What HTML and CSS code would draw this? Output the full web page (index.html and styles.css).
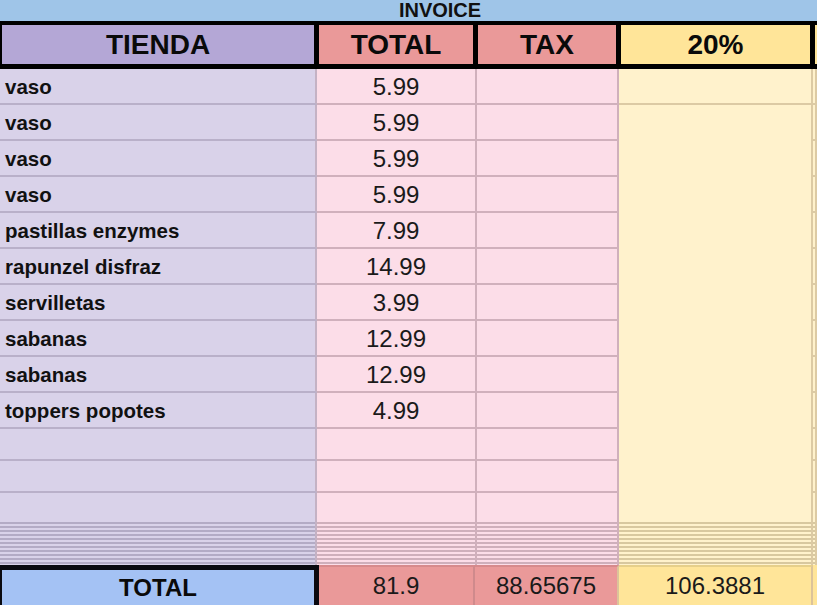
FILE: index.html
```html
<!DOCTYPE html>
<html>
<head>
<meta charset="utf-8">
<link rel="stylesheet" href="styles.css">
</head>
<body>
<div class="sheet">
  <div class="title"><span>INVOICE</span></div>
  <div class="head">
    <div class="h h-store">TIENDA</div>
    <div class="h h-total">TOTAL</div>
    <div class="h h-tax">TAX</div>
    <div class="h h-pct">20%</div>
    <div class="h h-extra"></div>
  </div>
  <div class="grid">
    <div class="c name">vaso</div><div class="c num">5.99</div><div class="c tax"></div><div class="c pct"></div><div class="c extra"></div>
    <div class="c name">vaso</div><div class="c num">5.99</div><div class="c tax"></div><div class="c pct-merged"></div><div class="c extra"></div>
    <div class="c name">vaso</div><div class="c num">5.99</div><div class="c tax"></div><div class="c extra"></div>
    <div class="c name">vaso</div><div class="c num">5.99</div><div class="c tax"></div><div class="c extra"></div>
    <div class="c name">pastillas enzymes</div><div class="c num">7.99</div><div class="c tax"></div><div class="c extra"></div>
    <div class="c name">rapunzel disfraz</div><div class="c num">14.99</div><div class="c tax"></div><div class="c extra"></div>
    <div class="c name">servilletas</div><div class="c num">3.99</div><div class="c tax"></div><div class="c extra"></div>
    <div class="c name">sabanas</div><div class="c num">12.99</div><div class="c tax"></div><div class="c extra"></div>
    <div class="c name">sabanas</div><div class="c num">12.99</div><div class="c tax"></div><div class="c extra"></div>
    <div class="c name">toppers popotes</div><div class="c num">4.99</div><div class="c tax"></div><div class="c extra"></div>
    <div class="c name"></div><div class="c num"></div><div class="c tax"></div><div class="c extra"></div>
    <div class="c name"></div><div class="c num"></div><div class="c tax"></div><div class="c extra"></div>
    <div class="c name nob"></div><div class="c num nob"></div><div class="c tax nob"></div><div class="c extra nob"></div>
    <div class="c s-name nob"></div><div class="c s-num nob"></div><div class="c s-tax nob"></div><div class="c s-pct nob"></div><div class="c s-extra nob"></div>
  </div>
  <div class="foot">
    <div class="f f-label">TOTAL</div>
    <div class="f f-total">81.9</div>
    <div class="f f-tax">88.65675</div>
    <div class="f f-pct">106.3881</div>
    <div class="f f-extra"></div>
  </div>
</div>
</body>
</html>
```
FILE: styles.css
```css
* { box-sizing: border-box; }
html, body { margin: 0; padding: 0; }
body {
  width: 817px;
  height: 605px;
  overflow: hidden;
  background: #fff2cc;
  font-family: "Liberation Sans", Arial, sans-serif;
  color: #111;
}
.sheet { width: 817px; }

.title {
  height: 21px;
  background: #9fc5e8;
  overflow: hidden;
  text-align: center;
  padding-left: 63px;
  font-weight: bold;
  font-size: 20px;
  line-height: 20px;
  color: #111;
}

.head {
  display: flex;
  gap: 5px;
  height: 48px;
  background: #000;
  padding: 4px 0 5px 2px;
}
.h {
  display: flex;
  align-items: center;
  justify-content: center;
  font-weight: bold;
  font-size: 28px;
  color: #0a0a0a;
}
.h-store { width: 312px; background: #b4a7d6; }
.h-total { width: 154px; background: #ea9999; }
.h-tax { width: 138px; background: #ea9999; }
.h-pct { width: 189px; background: #ffe599; }
.h-extra { flex: 1; background: #ffe599; }

.grid {
  display: grid;
  grid-template-columns: 317px 160px 142px 194px 1fr;
  grid-template-rows: repeat(10, 36px) 32px 32px 29px 43px;
}
.c {
  border-right: 2px solid;
  border-bottom: 2px solid;
  display: flex;
  align-items: center;
  padding-top: 2px;
}
.c.nob { border-bottom: none; }

.name {
  background: #d9d2e9;
  border-color: #b9b0c9;
  border-right-color: #c4b2c4;
  padding-left: 5px;
  font-weight: bold;
  font-size: 20.5px;
}
.num, .tax {
  background: #fcdde8;
  border-color: #d0b0bc;
}
.num {
  justify-content: center;
  font-size: 24px;
  color: #1a1a1a;
}
.pct, .pct-merged, .extra {
  background: #fff2cc;
  border-color: #dccaa4;
}
.pct-merged { grid-row: span 12; border-bottom: none; }

.s-name {
  border-right-color: #c4b2c4;
  background: repeating-linear-gradient(to bottom, #b3abc5 0 2px, #d9d2e9 2px 4px);
}
.s-num, .s-tax {
  border-right-color: #d0b0bc;
  background: repeating-linear-gradient(to bottom, #cfafbb 0 2px, #fcdde8 2px 4px);
}
.s-pct, .s-extra {
  border-right-color: #dccaa4;
  background: repeating-linear-gradient(to bottom, #d8c89f 0 2px, #fff2cc 2px 4px);
}

.foot {
  display: flex;
  height: 40px;
}
.f {
  display: flex;
  align-items: center;
  justify-content: center;
  font-size: 24px;
  color: #1a1a1a;
}
.f-label {
  width: 319px;
  background: #a4c2f4;
  border-top: 5px solid #0a0a10;
  border-left: 2px solid #0a0a10;
  border-right: 5px solid #0a0a10;
  font-weight: bold;
  color: #0a0a0a;
}
.f-total {
  width: 156px;
  background: #ea9999;
  border-top: 2px solid #d78a8c;
  border-right: 2px solid #cf8a8c;
}
.f-tax {
  width: 144px;
  background: #ea9999;
  border-top: 2px solid #d78a8c;
  border-right: 2px solid #dcc39a;
}
.f-pct {
  width: 194px;
  background: #ffe599;
  border-top: 2px solid #e6cf8a;
  border-right: 2px solid #dcc39a;
}
.f-extra { flex: 1; background: #ffe599; }
```
